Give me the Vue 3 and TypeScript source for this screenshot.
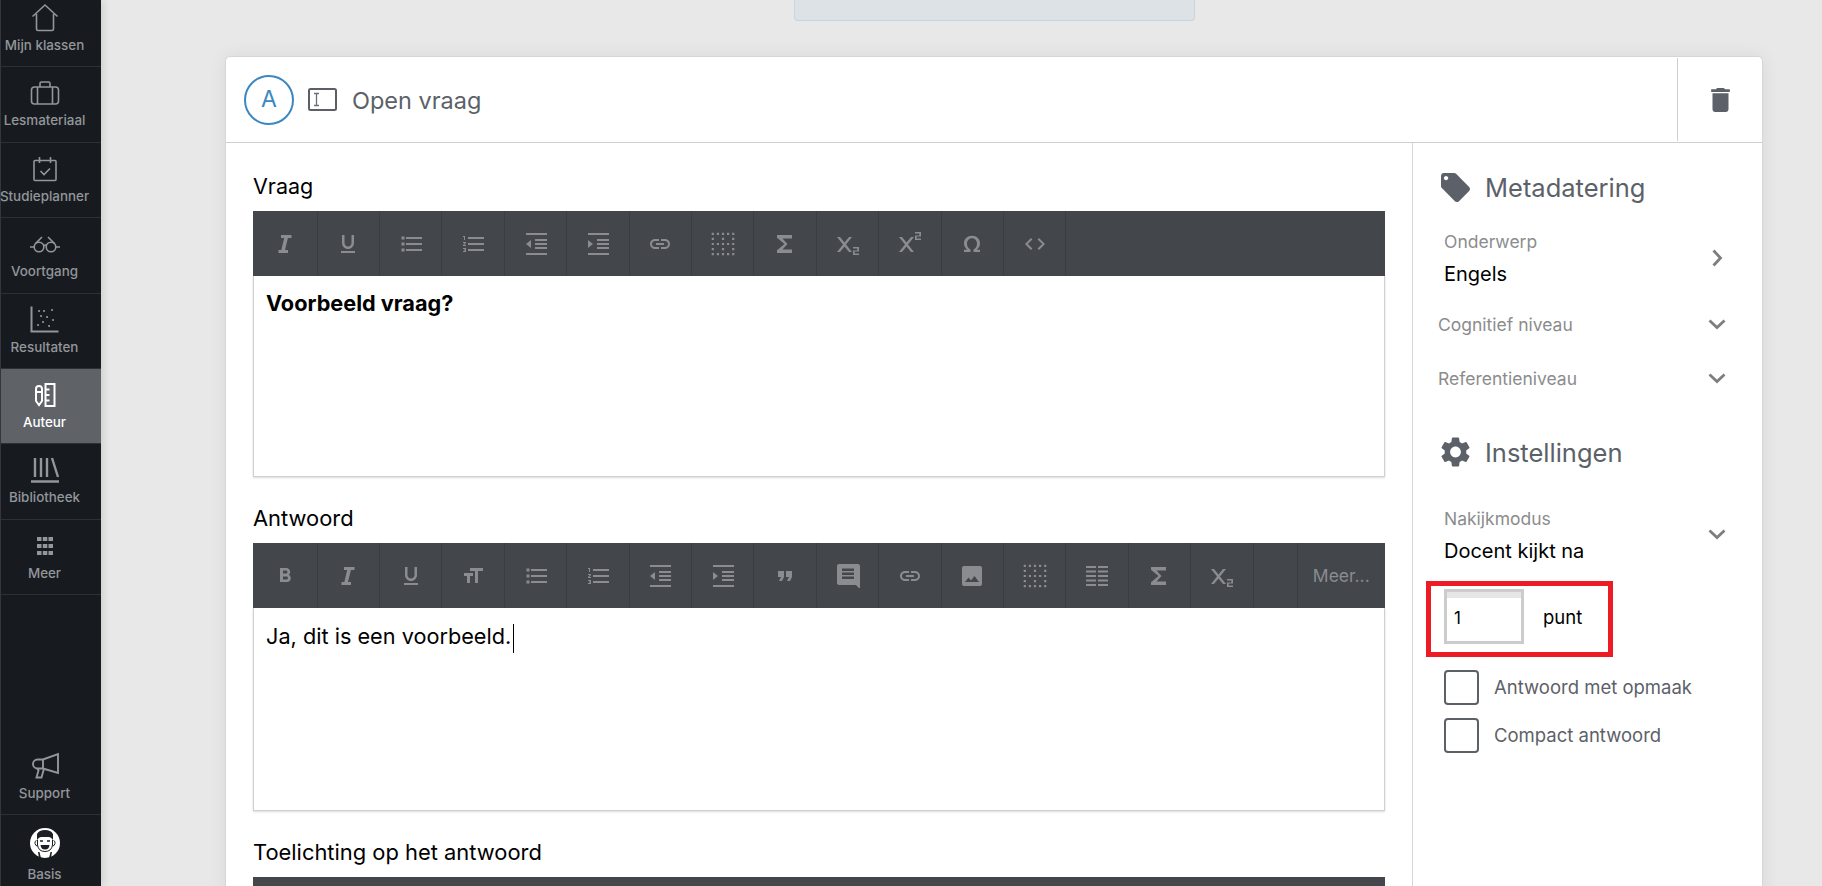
<script setup lang="ts">
type NavItem = { label: string; icon: string; active?: boolean }

const navItems: NavItem[] = [
  { label: 'Mijn klassen', icon: 'home' },
  { label: 'Lesmateriaal', icon: 'case' },
  { label: 'Studieplanner', icon: 'planner' },
  { label: 'Voortgang', icon: 'glasses' },
  { label: 'Resultaten', icon: 'chart' },
  { label: 'Auteur', icon: 'author', active: true },
  { label: 'Bibliotheek', icon: 'library' },
  { label: 'Meer', icon: 'grid' },
]

// dotted table icon: outer ring and centre cross of small squares
function dottedTable(): string {
  let d = ''
  for (let r = 0; r < 5; r++) {
    for (let c = 0; c < 5; c++) {
      if (r === 0 || r === 4 || c === 0 || c === 4 || r === 2 || c === 2) {
        d += `M${0.7 + c * 5.1} ${0.7 + r * 5.1}h2.2v2.2h-2.2z`
      }
    }
  }
  return d
}

const glyphs: Record<string, string> = {
  bold: 'M15.6 10.79c.97-.67 1.65-1.77 1.65-2.79 0-2.26-1.75-4-4-4H7v14h7.04c2.09 0 3.71-1.7 3.71-3.79 0-1.52-.86-2.82-2.15-3.42zM10 6.5h3c.83 0 1.5.67 1.5 1.5s-.67 1.5-1.5 1.5h-3v-3zm3.5 9H10v-3h3.5c.83 0 1.5.67 1.5 1.5s-.67 1.5-1.5 1.5z',
  italic: 'M8 3v3h3.200L8.300 18H5.500v3h9.500v-3h-3l2.900-12H18.500V3z',
  underline: 'M12 17c3.31 0 6-2.69 6-6V3h-2.5v8c0 1.93-1.57 3.5-3.5 3.5S8.5 12.93 8.5 11V3H6v8c0 3.31 2.69 6 6 6zm-7 2v2h14v-2H5z',
  size: 'M9 4v3h5v12h3V7h5V4H9zm-6 8h3v7h3v-7h3V9H3v3z',
  bullets: 'M2.500 4.500h3v3h-3zM2.500 10.500h3v3h-3zM2.500 16.500h3v3h-3zM7 19h16v-2H7v2zm0-6h16v-2H7v2zm0-8v2h16V5H7z',
  numbers: 'M2 17h2v.5H3v1h1v.5H2v1h3v-4H2v1zm1-9h1V4H2v1h1v3zm-1 3h1.8L2 13.1v.9h3v-1H3.2L5 10.9V10H2v1zm5-6v2h16V5H7zm0 14h16v-2H7v2zm0-6h16v-2H7v2z',
  outdent: 'M11 17h12v-2H11v2zm-9-5l5 4V8l-5 4zm0 11h21v-2H2v2zM2 1v2h21V1H2zm9 8h12V7H11v2zm0 4h12v-2H11v2z',
  indent: 'M2 23h21v-2H2v2zM2 8v8l5-4-5-4zm9 9h12v-2H11v2zM2 1v2h21V1H2zm9 8h12V7H11v2zm0 4h12v-2H11v2z',
  link: 'M3.9 12c0-1.71 1.39-3.1 3.1-3.1h4V7H7c-2.76 0-5 2.24-5 5s2.24 5 5 5h4v-1.9H7c-1.71 0-3.1-1.39-3.1-3.1zM8 13h8v-2H8v2zm9-6h-4v1.9h4c1.71 0 3.1 1.39 3.1 3.1s-1.39 3.1-3.1 3.1h-4V17h4c2.76 0 5-2.24 5-5s-2.24-5-5-5z',
  table: dottedTable(),
  rows: 'M1 2h10v2H1zM13 2h10v2H13zM1 6.500h10v2H1zM13 6.500h10v2H13zM1 11h10v2H1zM13 11h10v2H13zM1 15.500h10v2H1zM13 15.500h10v2H13zM1 20h10v2H1zM13 20h10v2H13z',
  sigma: 'M19 3H4v2.800L11.500 12 4 18.200V21h15v-3.500H9.500l5-5.500-5-5.500H19z',
  sub: 'M1 5h3l4.500 5.500L13 5h3l-6 7.500 6 7.500h-3l-4.500-5.500L4 20H1l6-7.500zM17 15h6v4.500h-4.300v2H23V23h-6v-4.500h4.300v-2H17z',
  sup: 'M1 5h3l4.500 5.500L13 5h3l-6 7.500 6 7.500h-3l-4.500-5.500L4 20H1l6-7.500zM17 0h6v4.500h-4.300v2H23V8h-6V3.500h4.300v-2H17z',
  omega: 'M20 20h-6.500v-2.400c2.200-1 3.500-3.200 3.500-5.800 0-3.200-2-5.600-5-5.600s-5 2.400-5 5.600c0 2.600 1.300 4.800 3.500 5.800V20H4v-2.200h3.400C5.300 16.300 4 14.100 4 11.500 4 7 7.300 3.800 12 3.800s8 3.200 8 7.700c0 2.600-1.300 4.800-3.400 6.300H20z',
  code: 'M9.400 16.600L4.800 12l4.600-4.600L8 6l-6 6 6 6 1.400-1.400zm5.200 0l4.600-4.600-4.600-4.600L16 6l6 6-6 6-1.400-1.400z',
  quote: 'M6 17h3l2-4V7H5v6h3zm8 0h3l2-4V7h-6v6h3z',
  comment: 'M20 0H3C1.900 0 1 .9 1 2v17c0 1.100.9 2 2 2h17l4 4V2c0-1.100-.9-2-2-2zm-2 15H6v-2.500h12V15zm0-4H6V8.500h12V11zm0-4H6V4.500h12V7z',
  image: 'M22 20V4c0-1.100-.9-2-2-2H4c-1.100 0-2 .9-2 2v16c0 1.100.9 2 2 2h16c1.100 0 2-.9 2-2zM8.500 13.500l2.500 3 3.500-4.500 4.500 6H5l3.500-4.500z',
}

const questionTools = ['italic', 'underline', 'bullets', 'numbers', 'outdent', 'indent', 'link', 'table', 'sigma', 'sub', 'sup', 'omega', 'code']
const answerTools = ['bold', 'italic', 'underline', 'size', 'bullets', 'numbers', 'outdent', 'indent', 'quote', 'comment', 'link', 'image', 'table', 'rows', 'sigma', 'sub']
</script>

<template>
  <div class="page">
    <aside class="nav">
      <a
        v-for="item in navItems"
        :key="item.label"
        class="nav-item"
        :class="{ 'nav-item--active': item.active }"
      >
        <svg class="nav-icon" viewBox="0 0 30 30" fill="none" stroke="currentColor" stroke-width="1.6" aria-hidden="true">
          <template v-if="item.icon === 'home'">
            <path d="M2.500 13.500 15 2l12.500 11.500M6.500 11v15a1.500 1.500 0 0 0 1.500 1.500h14a1.500 1.500 0 0 0 1.500-1.500V11" />
          </template>
          <template v-else-if="item.icon === 'case'">
            <rect x="1.500" y="9" width="27" height="17" rx="3" />
            <path d="M10 9V5.500A1.500 1.500 0 0 1 11.500 4h7A1.500 1.500 0 0 1 20 5.500V9M7.500 9v17M22.500 9v17" />
          </template>
          <template v-else-if="item.icon === 'planner'">
            <rect x="4" y="6.500" width="22" height="20" rx="1" />
            <path d="M9.500 3v6M20.500 3v6M10.500 17l3.500 3.500 6-6" />
          </template>
          <template v-else-if="item.icon === 'glasses'">
            <circle cx="9" cy="18" r="4.800" />
            <circle cx="21" cy="18" r="4.800" />
            <path d="M13.500 16.500q1.500-1 3 0M4.200 18H0M25.800 18H30M5.500 14.500 12 8M24.500 14.500 18 8" />
          </template>
          <template v-else-if="item.icon === 'chart'">
            <path d="M1.500 1.500v25h27" stroke-width="2" />
            <path d="M8 20h.1M13 17h.1M19 21h.1M11 11h.1M17 12h.1M23 15h.1M14 6h.1M22 5h.1M9 6h.1" stroke-width="2" stroke-linecap="round" />
          </template>
          <template v-else-if="item.icon === 'author'">
            <path d="M6 9a3 3 0 0 1 6 0v12l-3 4-3-4zM6 12h6" stroke-width="2" />
            <path d="M15.500 4h9v22h-9zM15.500 9.500h4M15.500 15h4M15.500 20.500h4" stroke-width="2" />
          </template>
          <template v-else-if="item.icon === 'library'">
            <path d="M5 3v19M11 3v19M17 3v19M22 3l6 19M1 26.500h28" stroke-width="2.400" />
          </template>
          <template v-else-if="item.icon === 'grid'">
            <path
              fill="currentColor"
              stroke="none"
              d="M7 6h4.500v4H7zM12.800 6h4.500v4h-4.500zM18.500 6H23v4h-4.500zM7 13h4.500v4H7zM12.800 13h4.500v4h-4.500zM18.500 13H23v4h-4.500zM7 20h4.500v4H7zM12.800 20h4.500v4h-4.500zM18.500 20H23v4h-4.500z"
            />
          </template>
        </svg>
        <span class="nav-label">{{ item.label }}</span>
      </a>

      <a class="nav-item nav-item--bottom">
        <svg class="nav-icon" viewBox="0 0 30 30" fill="none" stroke="currentColor" stroke-width="1.900" aria-hidden="true">
          <path d="M28 3v19L13 17.500H7.500a4.500 4.500 0 0 1 0-9H13zM13 8.500v9M7 17.500l1.500 2-2 7h5l2.500-9" />
        </svg>
        <span class="nav-label">Support</span>
      </a>
      <a class="nav-item nav-item--user">
        <svg class="nav-avatar" viewBox="0 0 30 30" aria-hidden="true">
          <circle cx="15" cy="15" r="15" fill="#fff" />
          <path d="M7 12V6q2-4 8-4t8 4v6q-2-3-4-3H11q-2 0-4 3z" fill="#1d2125" />
          <path d="M6.500 12.500q-2 .5-1.500 3t2.500 2.500M23.500 12.500q2 .5 1.500 3t-2.500 2.500" fill="none" stroke="#1d2125" stroke-width="1" />
          <path d="M7.500 12v5q1 6.500 7.500 6.500t7.500-6.500v-5" fill="none" stroke="#1d2125" stroke-width="1" />
          <path d="M10 13h3M17 13h3" stroke="#1d2125" stroke-width="1.400" />
          <path d="M10.500 17h9q-.5 4.500-4.500 4.500T10.500 17z" fill="#1d2125" />
          <path d="M8 24h1.500l1.500 6H9zM20.500 24H22l-1 6h-2z" fill="#1d2125" />
        </svg>
        <span class="nav-label">Basis</span>
      </a>
    </aside>

    <main class="content">
      <div class="stub"></div>

      <section class="card">
        <header class="card-head">
          <span class="letter">A</span>
          <svg class="type-icon" viewBox="0 0 29 23" fill="none" aria-hidden="true">
            <rect x="1" y="1" width="27" height="21" rx="1.500" stroke="#5c6066" stroke-width="2" />
            <path d="M6 5.500h5M6 17.500h5M8.500 5.500v12" stroke="#6d7177" stroke-width="1.300" />
          </svg>
          <h1 class="card-title">Open vraag</h1>
          <button class="trash" type="button" aria-label="Verwijderen">
            <svg viewBox="5 3 14 18" width="19" height="24" fill="#5c6068" aria-hidden="true">
              <path d="M6 19c0 1.100.9 2 2 2h8c1.100 0 2-.9 2-2V7H6v12zM19 4h-3.500l-1-1h-5l-1 1H5v2h14V4z" />
            </svg>
          </button>
        </header>

        <div class="card-body">
          <div class="editors">
            <label class="field-title">Vraag</label>
            <div class="toolbar">
              <span v-for="tool in questionTools" :key="tool" class="tool">
                <svg viewBox="0 0 24 24" width="24" height="24" fill="currentColor" aria-hidden="true">
                  <path :d="glyphs[tool]" />
                </svg>
              </span>
            </div>
            <div class="editor-body"><strong>Voorbeeld vraag?</strong></div>

            <label class="field-title field-title--next">Antwoord</label>
            <div class="toolbar">
              <span v-for="tool in answerTools" :key="tool" class="tool">
                <svg viewBox="0 0 24 24" width="24" height="24" fill="currentColor" aria-hidden="true">
                  <path :d="glyphs[tool]" />
                </svg>
              </span>
              <span class="tool tool--gap"></span>
              <span class="tool tool--more">Meer...</span>
            </div>
            <div class="editor-body editor-body--tall">Ja, dit is een voorbeeld.<span class="caret"></span></div>

            <label class="field-title field-title--next">Toelichting op het antwoord</label>
            <div class="toolbar"></div>
          </div>

          <aside class="side">
            <h2 class="side-title side-title--first">
              <svg viewBox="2 2 20 20" width="29" height="29" fill="#5c6068" aria-hidden="true">
                <path d="M21.410 11.580l-9-9C12.050 2.220 11.550 2 11 2H4c-1.100 0-2 .9-2 2v7c0 .55.22 1.050.59 1.420l9 9c.36.36.86.58 1.410.58.55 0 1.050-.22 1.410-.59l7-7c.37-.36.59-.86.59-1.410 0-.55-.23-1.060-.59-1.420zM5.500 7C4.670 7 4 6.330 4 5.500S4.670 4 5.500 4 7 4.670 7 5.500 6.330 7 5.500 7z" />
              </svg>
              Metadatering
            </h2>

            <div class="select">
              <div>
                <div class="select-label">Onderwerp</div>
                <div class="select-value">Engels</div>
              </div>
              <svg class="chevron" viewBox="0 0 18 18" fill="none" aria-hidden="true">
                <path d="M5.500 1.500 12.500 9l-7 7.500" />
              </svg>
            </div>
            <div class="collapsed">
              <span>Cognitief niveau</span>
              <svg class="chevron" viewBox="0 0 18 18" fill="none" aria-hidden="true">
                <path d="M1.500 5.500 9 12.500l7.500-7" />
              </svg>
            </div>
            <div class="collapsed">
              <span>Referentieniveau</span>
              <svg class="chevron" viewBox="0 0 18 18" fill="none" aria-hidden="true">
                <path d="M1.500 5.500 9 12.500l7.500-7" />
              </svg>
            </div>

            <h2 class="side-title side-title--second">
              <svg viewBox="2.500 2 19 20" width="29" height="30" fill="#5c6068" aria-hidden="true">
                <path d="M19.140 12.940c.04-.3.06-.61.06-.94 0-.32-.02-.64-.07-.94l2.030-1.580a.49.49 0 0 0 .12-.61l-1.920-3.320a.488.488 0 0 0-.59-.22l-2.390.96c-.5-.38-1.030-.7-1.620-.94l-.36-2.540a.484.484 0 0 0-.48-.41h-3.840c-.24 0-.43.17-.47.41l-.36 2.540c-.59.24-1.130.57-1.620.94l-2.390-.96c-.22-.08-.47 0-.59.22L2.740 8.870c-.12.21-.08.47.12.61l2.030 1.580c-.05.3-.09.63-.09.94s.02.64.07.94l-2.030 1.580a.49.49 0 0 0-.12.61l1.920 3.320c.12.22.37.29.59.22l2.390-.96c.5.38 1.030.7 1.620.94l.36 2.540c.05.24.24.41.48.41h3.840c.24 0 .44-.17.47-.41l.36-2.540c.59-.24 1.130-.56 1.620-.94l2.390.96c.22.08.47 0 .59-.22l1.920-3.320c.12-.22.07-.47-.12-.61l-2.010-1.580zM12 15.600c-1.980 0-3.600-1.620-3.600-3.600s1.620-3.600 3.600-3.600 3.600 1.620 3.600 3.600-1.620 3.600-3.600 3.600z" />
              </svg>
              Instellingen
            </h2>

            <div class="select select--mode">
              <div>
                <div class="select-label">Nakijkmodus</div>
                <div class="select-value">Docent kijkt na</div>
              </div>
              <svg class="chevron chevron--up" viewBox="0 0 18 18" fill="none" aria-hidden="true">
                <path d="M1.500 5.500 9 12.500l7.500-7" />
              </svg>
            </div>

            <div class="points">
              <div class="points-input">1</div>
              <span class="points-unit">punt</span>
              <div class="highlight"></div>
            </div>

            <div class="check check--first"><span class="box"></span>Antwoord met opmaak</div>
            <div class="check"><span class="box"></span>Compact antwoord</div>
          </aside>
        </div>
      </section>
    </main>
  </div>
</template>

<style>
html,
body {
  margin: 0;
  height: 100%;
  overflow: hidden;
  background: #e8e8e8;
}
</style>

<style scoped>
.page {
  display: flex;
  height: 886px;
  overflow: hidden;
  background: #e8e8e8;
  font-family: Inter, Lato, "Liberation Sans", sans-serif;
  color: #000;
}

.nav {
  flex: none;
  display: flex;
  flex-direction: column;
  width: 100px;
  height: 886px;
  border-left: 1px solid #33373c;
  background: #171b1f;
  box-shadow: 2px 0 8px rgba(0, 0, 0, 0.12);
}

.nav-item {
  flex: none;
  display: flex;
  flex-direction: column;
  align-items: center;
  box-sizing: border-box;
  width: 100%;
  height: 75.4px;
  padding: 11px 13px 0 0;
  border-bottom: 1px solid #2c3136;
  color: #93969a;
}

.nav-item:first-child {
  margin-top: -8px;
}

.nav-item--active {
  background: #5f6368;
  color: #fff;
}

.nav-item--bottom {
  margin-top: auto;
}

.nav-item--user {
  height: 71px;
  padding-top: 13px;
  border-bottom: 0;
}

.nav-icon {
  width: 30px;
  height: 30px;
}

.nav-avatar {
  width: 30px;
  height: 30px;
}

.nav-label {
  margin-top: 4px;
  font-size: 13.4px;
  line-height: 16px;
  font-weight: 500;
  white-space: nowrap;
}

.nav-item--user .nav-label {
  margin-top: 8px;
}

.content {
  flex: none;
  display: flex;
  flex-direction: column;
  width: 1538px;
  margin-left: 124px;
}

.stub {
  flex: none;
  box-sizing: border-box;
  width: 401px;
  height: 21px;
  margin: 0 auto;
  border: 1px solid #c6d5e3;
  border-top: 0;
  border-radius: 0 0 4px 4px;
  background: #dde2e6;
}

.card {
  flex: none;
  box-sizing: border-box;
  margin-top: 35px;
  border: 1px solid #d6d6d6;
  border-radius: 5px 5px 0 0;
  background: #fff;
  box-shadow: 0 0 18px rgba(0, 0, 0, 0.07);
}

.card-head {
  display: flex;
  align-items: center;
  height: 85px;
  padding-left: 18px;
  border-bottom: 1px solid #cfcfcf;
}

.letter {
  flex: none;
  box-sizing: border-box;
  width: 50px;
  height: 50px;
  border: 2.5px solid #3a87c2;
  border-radius: 50%;
  color: #3a87c2;
  font-size: 23px;
  line-height: 45px;
  text-align: center;
}

.type-icon {
  flex: none;
  width: 29px;
  height: 23px;
  margin-left: 14px;
}

.card-title {
  margin: 2px 0 0 15px;
  color: #5c6168;
  font-size: 23.5px;
  font-weight: 400;
}

.trash {
  display: flex;
  align-items: center;
  justify-content: center;
  width: 85px;
  height: 83px;
  margin-left: auto;
  padding: 0;
  border: 0;
  border-left: 1px solid #cfcfcf;
  background: none;
}

.card-body {
  display: flex;
}

.editors {
  flex: none;
  box-sizing: border-box;
  width: 1186px;
  height: 760px;
  padding: 28px 27px 0;
}

.field-title {
  display: block;
  height: 30px;
  margin-bottom: 10px;
  font-size: 21.5px;
  line-height: 30px;
}

.field-title--next {
  margin-top: 26px;
  font-size: 21.9px;
}

.toolbar {
  display: flex;
  height: 65px;
  background: #43464b;
  color: #8a8c8f;
}

.tool {
  flex: none;
  display: flex;
  align-items: center;
  justify-content: center;
  box-sizing: border-box;
  width: 62.4px;
  border-right: 1px solid #3a3d42;
}

.tool:first-child {
  width: 64.7px;
}

.tool--gap {
  width: 44px;
}

.tool--more {
  width: auto;
  flex: 1;
  border-right: 0;
  font-size: 17.5px;
}

.editor-body {
  box-sizing: border-box;
  height: 201px;
  padding: 11px 12px;
  border: 1px solid #d0d0d0;
  border-top: 0;
  box-shadow: 0 1px 2px rgba(0, 0, 0, 0.15);
  font-size: 21.7px;
  line-height: 32px;
}

.editor-body--tall {
  height: 203px;
  padding-top: 12px;
}

.caret {
  display: inline-block;
  width: 1px;
  height: 29px;
  margin-left: 2px;
  background: #000;
  vertical-align: middle;
}

.side {
  flex: none;
  box-sizing: border-box;
  width: 350px;
  border-left: 1px solid #d6d6d6;
  padding-right: 36px;
}

.side-title {
  display: flex;
  align-items: center;
  gap: 15px;
  height: 36px;
  margin: 0;
  padding-left: 28px;
  color: #5c6168;
  font-size: 25.5px;
  font-weight: 400;
}

.side-title--first {
  margin-top: 26px;
}

.side-title--second {
  margin-top: 36px;
}

.select {
  display: flex;
  align-items: center;
  justify-content: space-between;
  height: 64px;
  margin-top: 21px;
  padding-left: 31px;
}

.select--mode {
  margin-top: 33px;
}

.select-label {
  color: #8c8c8c;
  font-size: 17.5px;
  line-height: 32px;
}

.select-value {
  font-size: 20px;
  line-height: 32px;
}

.chevron {
  flex: none;
  width: 18px;
  height: 18px;
  stroke: #7c7e81;
  stroke-width: 2.8;
}

.chevron--up {
  margin-top: -2px;
}

.collapsed {
  display: flex;
  align-items: center;
  justify-content: space-between;
  height: 40px;
  margin-top: 14px;
  padding-left: 25px;
  color: #8c8c8c;
  font-size: 17.5px;
}

.points {
  position: relative;
  display: flex;
  align-items: center;
  gap: 19px;
  margin: 22px 0 0 31px;
}

.points-input {
  box-sizing: border-box;
  width: 80px;
  height: 55px;
  padding: 5px 0 0 7px;
  border: 3px solid #cccccc;
  background: linear-gradient(#e6e6e6 6px, #fff 6px);
  font-size: 17px;
  line-height: 43px;
}

.points-unit {
  font-size: 18.5px;
}

.highlight {
  position: absolute;
  top: -8px;
  left: -18px;
  box-sizing: border-box;
  width: 187px;
  height: 76px;
  border: 5px solid #ed1c24;
}

.check {
  display: flex;
  align-items: center;
  gap: 15px;
  height: 36px;
  margin: 12px 0 0 31px;
  color: #5c6168;
  font-size: 18.5px;
}

.check--first {
  margin-top: 25px;
}

.box {
  box-sizing: border-box;
  width: 35px;
  height: 35px;
  border: 2.5px solid #5c6168;
  border-radius: 4px;
}
</style>
